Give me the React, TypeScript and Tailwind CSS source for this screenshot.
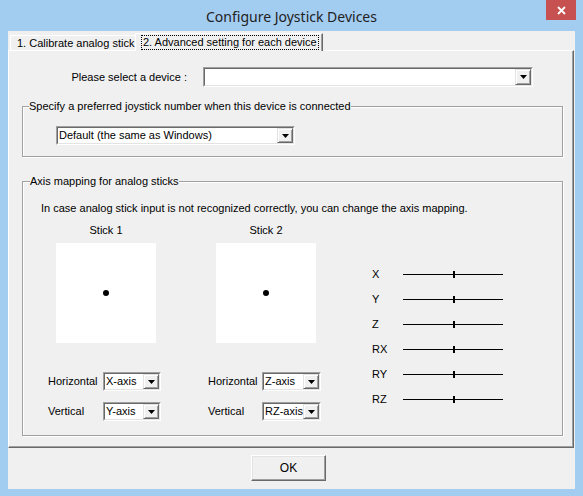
import React from 'react';

const Arrow = () => (
  <svg width="7" height="4" viewBox="0 0 7 4">
    <path d="M0 0H7L3.5 4Z" fill="#000" />
  </svg>
);

const Combo = ({ className, value }: { className: string; value?: string }) => (
  <div className={`flex border border-t-[#a0a0a0] border-l-[#a0a0a0] border-r-white border-b-white ${className}`}>
    <div className="flex flex-1 border border-t-[#696969] border-l-[#696969] border-r-[#e3e3e3] border-b-[#e3e3e3] bg-white">
      <div className="flex flex-1 items-center overflow-hidden whitespace-nowrap pl-[1px]">{value}</div>
      <div className="flex w-[16px] items-center justify-center border border-t-[#e3e3e3] border-l-[#e3e3e3] border-r-[#696969] border-b-[#696969] bg-[#f0f0f0] shadow-[inset_1px_1px_0_#fff,inset_-1px_-1px_0_#a0a0a0]">
        <Arrow />
      </div>
    </div>
  </div>
);

const StickColumn = ({ title, h, v, labelW, comboW }: { title: string; h: string; v: string; labelW: string; comboW: string }) => (
  <div className="flex flex-col">
    <div className="ml-[8px] h-[13px] w-[100px] text-center">{title}</div>
    <div className="ml-[8px] mt-[6px] flex h-[100px] w-[100px] items-center justify-center bg-white">
      <div className="h-[6px] w-[6px] rounded-full bg-black" />
    </div>
    <div className="mt-[29px] flex items-center">
      <div className={labelW}>Horizontal</div>
      <Combo className={`h-[19px] ${comboW}`} value={h} />
    </div>
    <div className="mt-[11px] flex items-center">
      <div className={labelW}>Vertical</div>
      <Combo className={`h-[19px] ${comboW}`} value={v} />
    </div>
  </div>
);

const axes = ['X', 'Y', 'Z', 'RX', 'RY', 'RZ'];

const App: React.FC = () => {
  return (
    <div className="flex h-[496px] w-[583px] flex-col bg-[#a3ccf1] font-['Liberation_Sans',Arial,sans-serif] text-[11px] leading-[13px] text-black">
      {/* Title bar */}
      <div className="relative flex h-[31px] items-center justify-center">
        <span className="pt-[2px] font-['Noto_Sans',sans-serif] text-[14px] text-[#222]">Configure Joystick Devices</span>
        <div className="absolute right-[7px] top-0 flex h-[20px] w-[30px] items-center justify-center bg-[#c75050]">
          <svg width="9" height="9" viewBox="0 0 9 9">
            <path d="M1 1L8 8M8 1L1 8" stroke="#fff" strokeWidth="1.8" />
          </svg>
        </div>
      </div>

      {/* Client area */}
      <div className="mx-[8px] mb-[7px] flex flex-1 flex-col bg-[#f0f0f0]">
        {/* Tabs */}
        <div className="flex h-[20px] items-end pl-[2px]">
          <div className="mb-[1px] flex h-[15px] w-[126px] items-center border-l border-t border-l-white border-t-white pl-[6px] shadow-[inset_-1px_0_0_#a0a0a0]">
            1. Calibrate analog stick
          </div>
          <div className="relative z-10 -ml-[1px] flex h-[18px] w-[188px] items-center border-l border-r border-t border-l-white border-r-[#696969] border-t-white bg-[#f0f0f0] pl-[5px] shadow-[inset_-1px_0_0_#a0a0a0]">
            <span className="border border-dotted border-black px-[1px]">2. Advanced setting for each device</span>
          </div>
        </div>

        {/* Tab page */}
        <div className="-mt-[1px] mr-[1px] flex h-[398px] flex-col border border-b-[#696969] border-l-white border-r-[#696969] border-t-white shadow-[inset_-1px_-1px_0_#a0a0a0]">
          <div className="mt-[16px] flex h-[20px] items-center">
            <div className="ml-[13px] w-[165px] text-right">Please select a device :</div>
            <Combo className="ml-[16px] h-[20px] w-[330px]" />
          </div>

          <fieldset className="ml-[13px] mt-[13px] w-[541px] border border-[#a0a0a0] pb-[11px] shadow-[inset_1px_1px_0_#fff,1px_1px_0_#fff]">
            <legend className="ml-[6px] bg-[#f0f0f0] p-0">Specify a preferred joystick number when this device is connected</legend>
            <Combo className="ml-[33px] mt-[13px] h-[19px] w-[239px]" value="Default (the same as Windows)" />
          </fieldset>

          <fieldset className="ml-[13px] mt-[18px] w-[541px] border border-[#a0a0a0] pb-[14px] shadow-[inset_1px_1px_0_#fff,1px_1px_0_#fff]">
            <legend className="ml-[7px] bg-[#f0f0f0] p-0">Axis mapping for analog sticks</legend>
            <div className="ml-[18px] mt-[14px]">
              In case analog stick input is not recognized correctly, you can change the axis mapping.
            </div>
            <div className="mt-[9px] flex">
              <div className="ml-[25px]">
                <StickColumn title="Stick 1" h="X-axis" v="Y-axis" labelW="w-[55px]" comboW="w-[58px]" />
              </div>
              <div className="ml-[47px]">
                <StickColumn title="Stick 2" h="Z-axis" v="RZ-axis" labelW="w-[54px]" comboW="w-[59px]" />
              </div>
              <div className="ml-[51px] mt-[38px] flex flex-col">
                {axes.map((a) => (
                  <div key={a} className="flex h-[25px] items-center">
                    <div className="w-[31px]">{a}</div>
                    <svg width="100" height="7" viewBox="0 0 100 7">
                      <rect x="0" y="3" width="100" height="1" fill="#000" />
                      <rect x="50" y="0" width="2" height="7" fill="#000" />
                    </svg>
                  </div>
                ))}
              </div>
            </div>
          </fieldset>
        </div>

        {/* Buttons */}
        <div className="flex">
          <div className="ml-[243px] mt-[7px] flex h-[26px] w-[75px] items-center justify-center border border-b-[#696969] border-l-white border-r-[#696969] border-t-white bg-[#f0f0f0] text-[12px] shadow-[inset_-1px_-1px_0_#a0a0a0,inset_1px_1px_0_#e3e3e3]">
            OK
          </div>
        </div>
      </div>
    </div>
  );
};

export default App;
